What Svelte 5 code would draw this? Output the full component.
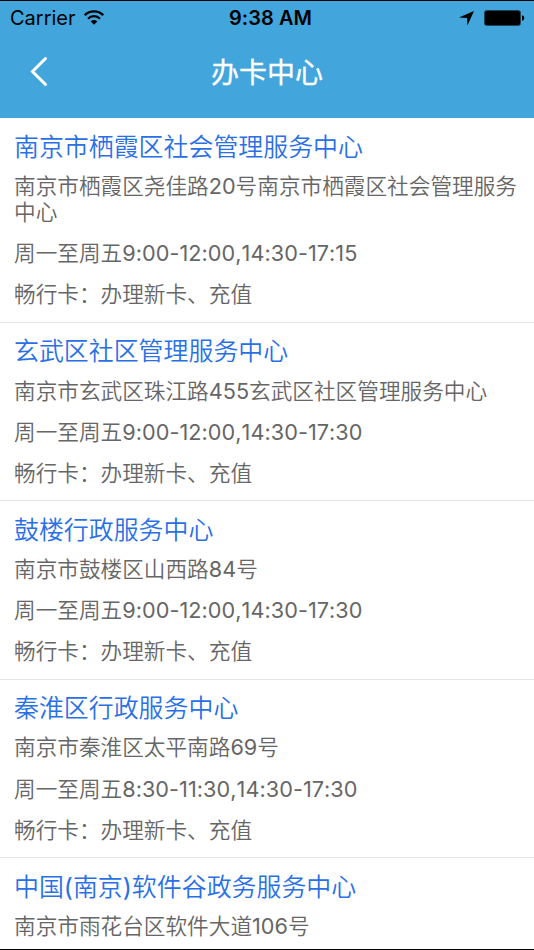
<script lang="ts">
  const service = "畅行卡：办理新卡、充值";

  const centers = [
    {
      name: "南京市栖霞区社会管理服务中心",
      address: "南京市栖霞区尧佳路20号南京市栖霞区社会管理服务中心",
      hours: "9:00-12:00,14:30-17:15",
      service,
    },
    {
      name: "玄武区社区管理服务中心",
      address: "南京市玄武区珠江路455玄武区社区管理服务中心",
      hours: "9:00-12:00,14:30-17:30",
      service,
    },
    {
      name: "鼓楼行政服务中心",
      address: "南京市鼓楼区山西路84号",
      hours: "9:00-12:00,14:30-17:30",
      service,
    },
    {
      name: "秦淮区行政服务中心",
      address: "南京市秦淮区太平南路69号",
      hours: "8:30-11:30,14:30-17:30",
      service,
    },
    {
      name: "中国(南京)软件谷政务服务中心",
      address: "南京市雨花台区软件大道106号",
    },
  ];
</script>

<div class="screen">
  <header>
    <div class="status">
      <div class="carrier">
        <span>Carrier</span>
        <svg width="20" height="15" viewBox="0 0 20 15" fill="none" stroke="#000" stroke-width="2.3">
          <path d="M.8 5.2a13 13 0 0 1 18.4 0" />
          <path d="M4 8.7a8.5 8.5 0 0 1 12 0" />
          <path d="M6.7 11.4a4.7 4.7 0 0 1 6.6 0L10 14.7z" fill="#000" stroke="none" />
        </svg>
      </div>
      <span class="time">9:38 AM</span>
      <div class="indicators">
        <svg width="15" height="15" viewBox="0 0 15 15">
          <path d="M15 0 8.4 14.4 8 7 0 6.5z" />
        </svg>
        <svg class="battery" width="41" height="16" viewBox="0 0 41 16">
          <rect x=".5" y=".5" width="36" height="15" rx="2" fill="none" stroke="#000" stroke-opacity=".6" />
          <rect x="1" y="1" width="35" height="14" rx="1.5" />
          <path d="M38 5.2c3 .6 3 5 0 5.6z" />
        </svg>
      </div>
    </div>
    <div class="nav">
      <button aria-label="返回">
        <svg width="18" height="30" viewBox="0 0 18 30" fill="none" stroke="#fff" stroke-width="3" stroke-linecap="round">
          <path d="M15.5 1.5 2.5 14.5l13 13" />
        </svg>
      </button>
      <h1>办卡中心</h1>
    </div>
  </header>

  <ul>
    {#each centers as center (center.name)}
      <li>
        <h2>{center.name}</h2>
        <p>{center.address}</p>
        {#if center.hours}
          <p>周一至周五<span class="hours">{center.hours}</span></p>
          <p>{center.service}</p>
        {/if}
      </li>
    {/each}
  </ul>
</div>

<style>
  :global(body) {
    margin: 0;
    background: #fff;
  }

  .screen {
    box-sizing: border-box;
    height: 950px;
    overflow: hidden;
    border-top: 1px solid #000;
    border-bottom: 1px solid #000;
    font-family: Inter, "Noto Sans CJK SC DemiLight", "Noto Sans CJK SC", sans-serif;
  }

  header {
    height: 117px;
    background: #42a5db;
  }

  .status {
    display: grid;
    grid-template-columns: 1fr auto 1fr;
    align-items: center;
    height: 35px;
    padding: 0 9px 0 10px;
    font-size: 20px;
    line-height: 35px;
  }

  .carrier,
  .indicators {
    display: flex;
    align-items: center;
  }

  .carrier {
    gap: 8px;
  }

  .carrier svg {
    margin-bottom: 2px;
  }

  .time {
    padding-left: 6px;
    font-weight: 600;
    letter-spacing: 0.05px;
  }

  .indicators {
    justify-content: flex-end;
    gap: 10px;
  }

  .indicators svg {
    margin-bottom: 1px;
  }

  .nav {
    display: grid;
    grid-template-columns: 60px 1fr 60px;
    align-items: center;
    height: 72px;
  }

  button {
    display: flex;
    padding: 0 0 0 30px;
    border: none;
    background: none;
  }

  h1 {
    margin: 0 0 2px;
    color: #fff;
    font-family: "Noto Sans CJK SC", sans-serif;
    font-size: 28px;
    font-weight: 400;
    line-height: 40px;
    text-align: center;
    -webkit-text-stroke: 0.3px #fff;
  }

  ul {
    margin: 0;
    padding: 0;
    list-style: none;
  }

  li {
    padding: 13.5px 14px 13.8px;
    border-bottom: 1px solid #e4e4e4;
  }

  li:first-child {
    padding-top: 14px;
    padding-bottom: 14.2px;
  }

  li:last-child {
    padding-top: 14px;
  }

  h2 {
    margin: 0 0 12.4px;
    color: #2970e6;
    font-size: 24.93px;
    font-weight: 400;
    line-height: 30px;
  }

  p {
    margin: 0 0 15.6px;
    color: #666;
    font-size: 21.65px;
    font-weight: 400;
    line-height: 25.5px;
  }

  p:last-child {
    margin-bottom: 0;
  }

  .hours {
    font-kerning: none;
    letter-spacing: 0.06px;
  }
</style>
